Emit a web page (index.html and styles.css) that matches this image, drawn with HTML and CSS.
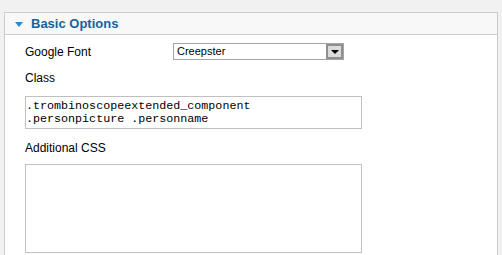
FILE: index.html
```html
<!DOCTYPE html>
<html lang="en">
<head>
    <meta charset="UTF-8">
    <title>Basic Options</title>
    <link rel="stylesheet" href="styles.css">
</head>
<body>
    <div class="panel">
        <div class="panel-head">
            <span class="toggle"></span>
            <h3>Basic Options</h3>
        </div>
        <div class="panel-body">
            <div class="row">
                <label class="row-label">Google Font</label>
                <div class="select">
                    <span class="select-value">Creepster</span>
                    <span class="select-arrow"><span class="arrow"></span></span>
                </div>
            </div>
            <label class="field-label label-class">Class</label>
            <textarea class="box box-small" readonly>.trombinoscopeextended_component
.personpicture .personname</textarea>
            <label class="field-label label-css">Additional CSS</label>
            <textarea class="box box-large" readonly></textarea>
        </div>
    </div>
</body>
</html>
```

FILE: styles.css
```css
body {
    margin: 0;
    padding: 12px 4px 0;
    background-color: #f1f1f1;
    font-family: 'Liberation Sans', Arial, sans-serif;
    font-size: 12px;
    color: #000;
    height: 255px;
    box-sizing: border-box;
    overflow: hidden;
}
.panel {
    background-color: #fff;
    border: 1px solid #cccccc;
    border-bottom: none;
    height: 260px;
}
.panel-head {
    display: flex;
    align-items: center;
    height: 21px;
    background-color: #f8f8f8;
    border-bottom: 1px solid #cccccc;
    padding-left: 10px;
}
.toggle {
    width: 0;
    height: 0;
    border-left: 4px solid transparent;
    border-right: 4px solid transparent;
    border-top: 5px solid #2c8bd0;
    margin-right: 8px;
    margin-top: 1px;
}
.panel-head h3 {
    margin: 0;
    font-size: 13px;
    font-weight: bold;
    color: #14649c;
}
.panel-body {
    padding: 8px 0 0 20px;
}
.row {
    display: flex;
    align-items: center;
    height: 17px;
}
.row-label {
    width: 148px;
}
.select {
    display: flex;
    width: 171px;
    height: 17px;
    box-sizing: border-box;
    border: 1px solid #a5a5a5;
    background-color: #fff;
}
.select-value {
    flex: 1;
    font-size: 11px;
    line-height: 15px;
    padding-left: 3px;
}
.select-arrow {
    display: flex;
    align-items: center;
    justify-content: center;
    width: 17px;
    box-sizing: border-box;
    border: 2px solid #8f8f8f;
    background-color: #dcdcdc;
}
.arrow {
    width: 0;
    height: 0;
    border-left: 4px solid transparent;
    border-right: 4px solid transparent;
    border-top: 4px solid #000;
}
.field-label {
    display: block;
    line-height: 14px;
    height: 14px;
}
.label-class {
    margin: 11px 0 11px;
}
.label-css {
    margin: 12px 0 9px;
}
.box {
    display: block;
    width: 337px;
    box-sizing: border-box;
    border: 1px solid #c0c0c0;
    margin: 0;
    padding: 3px 0 0 0;
    font-family: 'Liberation Mono', 'Courier New', monospace;
    font-size: 11.7px;
    line-height: 13px;
    resize: none;
    overflow: hidden;
    color: #000;
    background-color: #fff;
}
.box-small {
    height: 33px;
}
.box-large {
    height: 89px;
}
```
